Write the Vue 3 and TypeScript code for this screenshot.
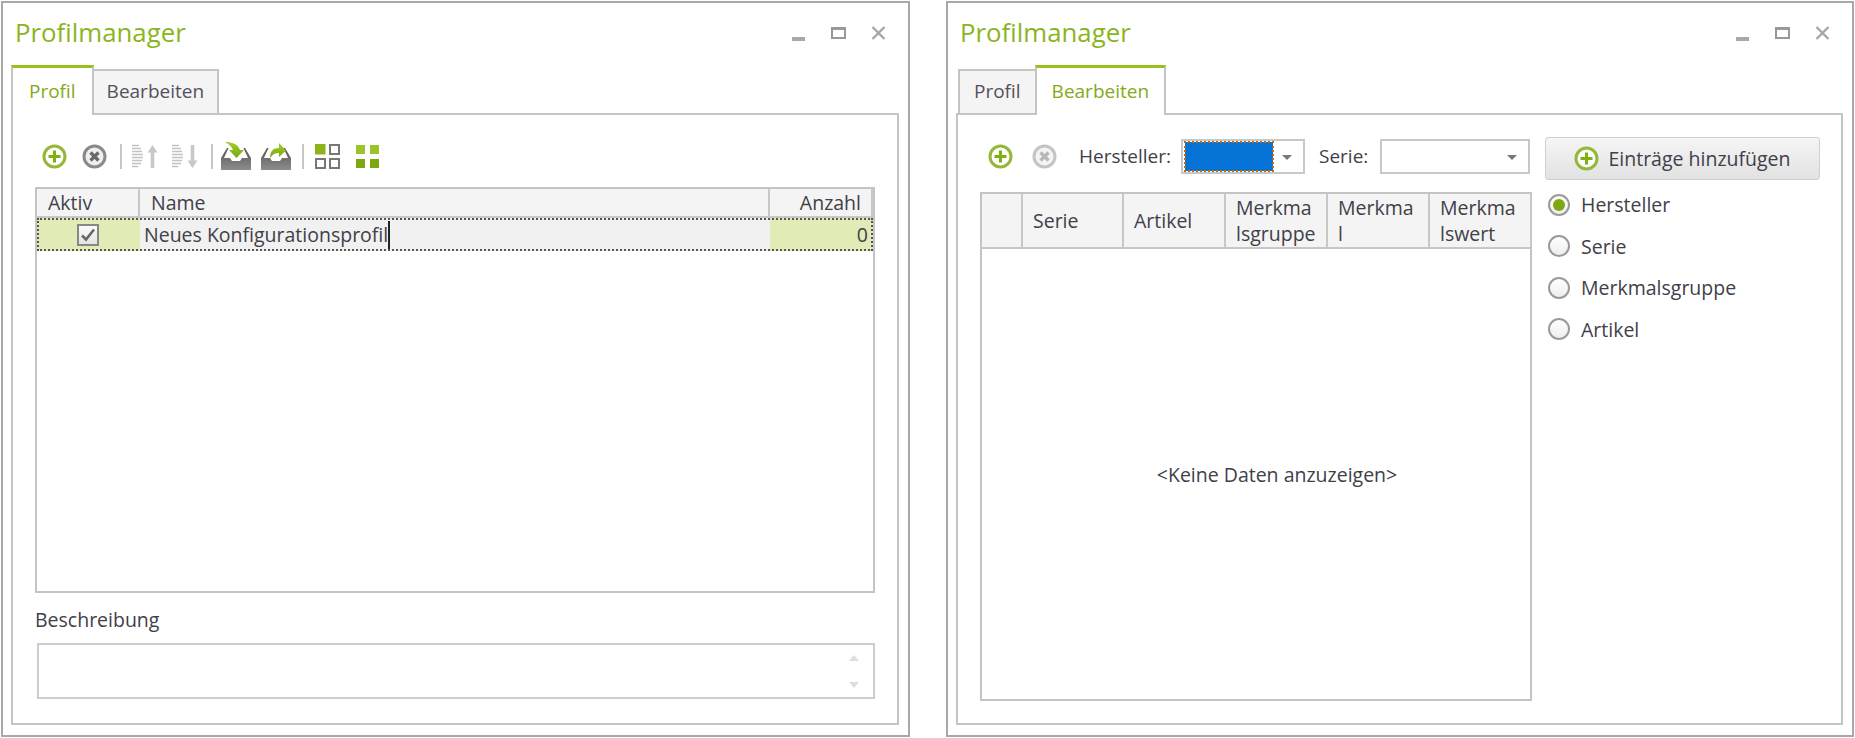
<script setup lang="ts">
import { ref } from 'vue'

type GridColumn = { label: string; width: number }

const leftTabs = ['Profil', 'Bearbeiten']
const profileColumns: { label: string; width: number; right?: boolean }[] = [
  { label: 'Aktiv', width: 103 },
  { label: 'Name', width: 630 },
  { label: 'Anzahl', width: 103, right: true },
]
const editColumns: GridColumn[] = [
  { label: '', width: 41 },
  { label: 'Serie', width: 101 },
  { label: 'Artikel', width: 102 },
  { label: 'Merkma\nlsgruppe', width: 102 },
  { label: 'Merkma\nl', width: 102 },
  { label: 'Merkma\nlswert', width: 102 },
]
const sources = ['Hersteller', 'Serie', 'Merkmalsgruppe', 'Artikel']
const selectedSource = ref('Hersteller')
</script>

<template>
  <div class="page">
    <svg class="defs" aria-hidden="true">
      <defs>
        <linearGradient id="trayFill" x1="0" y1="0" x2="0" y2="1">
          <stop offset="0" stop-color="#555" />
          <stop offset="1" stop-color="#8c8c8c" />
        </linearGradient>
        <linearGradient id="arrowFill" x1="0" y1="0" x2="0" y2="1">
          <stop offset="0" stop-color="#a4cc2c" />
          <stop offset="1" stop-color="#76a810" />
        </linearGradient>
      </defs>
      <symbol id="i-add" viewBox="0 0 25 25">
        <circle cx="12.5" cy="12.5" r="10.5" fill="#fff" stroke="#95b83a" stroke-width="3" />
        <path d="M12.5 6.5v12M6.5 12.5h12" stroke="#7fb011" stroke-width="3" fill="none" />
      </symbol>
      <symbol id="i-del" viewBox="0 0 25 25">
        <circle cx="12.5" cy="12.5" r="10.5" fill="#efefef" stroke="#8a8a8a" stroke-width="3" />
        <path d="M8.5 8.5l8 8M16.5 8.5l-8 8" stroke="#6a6a6a" stroke-width="3.4" fill="none" />
      </symbol>
      <symbol id="i-del-off" viewBox="0 0 25 25">
        <circle cx="12.5" cy="12.5" r="10.5" fill="#f4f4f4" stroke="#c4c4c4" stroke-width="3" />
        <path d="M8.5 8.5l8 8M16.5 8.5l-8 8" stroke="#b8b8b8" stroke-width="3.4" fill="none" />
      </symbol>
      <symbol id="i-lines" viewBox="0 0 12 25">
        <path
          d="M0 1.5h7M0 4.5h9M0 7.5h10M0 10.5h11M0 13.5h11M0 16.5h10M0 19.5h9M0 22.5h6"
          stroke="#c2c2c2"
          stroke-width="1.4"
          fill="none"
        />
      </symbol>
    </svg>

    <!-- PROFIL -->
    <section class="window">
      <header class="titlebar">
        <h1>Profilmanager</h1>
        <div class="controls">
          <span class="ctl"><i class="ctl-min"></i></span>
          <span class="ctl"><i class="ctl-max"></i></span>
          <span class="ctl">
            <svg width="15" height="14" viewBox="0 0 15 14"><path d="M1.5 1l12 12M13.5 1l-12 12" stroke="#a6a6a6" stroke-width="2.4" /></svg>
          </span>
        </div>
      </header>

      <nav class="tabs">
        <button v-for="(t, i) in leftTabs" :key="t" :class="['tab', { active: i === 0 }]">{{ t }}</button>
      </nav>

      <div class="panel panel-profile">
        <div class="toolbar">
          <span class="tool"><svg width="25" height="25"><use href="#i-add" /></svg></span>
          <span class="tool"><svg width="25" height="25"><use href="#i-del" /></svg></span>
          <i class="sep"></i>
          <span class="tool">
            <svg width="27" height="25" viewBox="0 0 27 25">
              <use href="#i-lines" width="12" height="25" />
              <path d="M20.500 1l5 7.500h-3.200V24h-3.600V8.500H15.500z" fill="#c8c8c8" />
            </svg>
          </span>
          <span class="tool">
            <svg width="27" height="25" viewBox="0 0 27 25">
              <use href="#i-lines" width="12" height="25" />
              <path d="M20.500 24l5-7.500h-3.200V1h-3.600v15.500H15.500z" fill="#c8c8c8" />
            </svg>
          </span>
          <i class="sep"></i>
          <span class="tool">
            <svg width="30" height="28" viewBox="0 0 30 28">
              <path d="M0 28V16L6 6h1.500L3 16h6l2 3h8l2-3h6L22.500 6H24l6 10v12z" fill="url(#trayFill)" />
              <path d="M4 0c7 0 13 2 15 8h4l-7.500 8L8 8h4C11 5 8 2 4 0z" fill="url(#arrowFill)" />
            </svg>
          </span>
          <span class="tool">
            <svg width="30" height="28" viewBox="0 0 30 28">
              <path d="M0 28V16L6 6h1.500L3 16h6l2 3h8l2-3h6L22.500 6H24l6 10v12z" fill="url(#trayFill)" />
              <path d="M9 16c0-7 3-10 9-10V1l7 7.500L18 15v-4c-4 0-6 1-9 5z" fill="url(#arrowFill)" />
            </svg>
          </span>
          <i class="sep"></i>
          <span class="tool">
            <svg width="25" height="25" viewBox="0 0 25 25">
              <rect x="0" y="0" width="10.500" height="10.500" fill="#8db319" />
              <rect x="15" y="1" width="9" height="9" fill="#fff" stroke="#777" stroke-width="2" />
              <rect x="1" y="15" width="9" height="9" fill="#fff" stroke="#777" stroke-width="2" />
              <rect x="15" y="15" width="9" height="9" fill="#fff" stroke="#777" stroke-width="2" />
            </svg>
          </span>
          <span class="tool">
            <svg width="23" height="23" viewBox="0 0 23 23">
              <rect x="0" y="0" width="9" height="9" fill="#9cc429" />
              <rect x="14" y="0" width="9" height="9" fill="#9cc429" />
              <rect x="0" y="14" width="9" height="9" fill="#7fa80e" />
              <rect x="14" y="14" width="9" height="9" fill="#7fa80e" />
            </svg>
          </span>
        </div>

        <div class="grid grid-profile">
          <div class="grid-head">
            <div
              v-for="c in profileColumns"
              :key="c.label"
              :class="['head-cell', { right: c.right }]"
              :style="{ width: c.width + 'px' }"
            >{{ c.label }}</div>
          </div>
          <div class="row">
            <div class="cell cell-green cell-check" :style="{ width: profileColumns[0].width + 'px' }">
              <span class="check">
                <svg width="16" height="14" viewBox="0 0 16 14"><path d="M2 7.500l4 4L14 1.500" stroke="#666" stroke-width="2.600" fill="none" /></svg>
              </span>
            </div>
            <div class="cell cell-name" :style="{ width: profileColumns[1].width + 'px' }">
              <span>Neues Konfigurationsprofil</span><i class="caret"></i>
            </div>
            <div class="cell cell-green cell-count" :style="{ width: profileColumns[2].width + 'px' }">0</div>
          </div>
        </div>

        <label class="desc-label">Beschreibung</label>
        <div class="desc-box">
          <i class="scroll-up"></i>
          <i class="scroll-down"></i>
        </div>
      </div>
    </section>

    <!-- BEARBEITEN -->
    <section class="window window-right">
      <header class="titlebar">
        <h1>Profilmanager</h1>
        <div class="controls">
          <span class="ctl"><i class="ctl-min"></i></span>
          <span class="ctl"><i class="ctl-max"></i></span>
          <span class="ctl">
            <svg width="15" height="14" viewBox="0 0 15 14"><path d="M1.500 1l12 12M13.500 1l-12 12" stroke="#a6a6a6" stroke-width="2.400" /></svg>
          </span>
        </div>
      </header>

      <nav class="tabs tabs-right">
        <button v-for="(t, i) in leftTabs" :key="t" :class="['tab', { active: i === 1 }]">{{ t }}</button>
      </nav>

      <div class="panel panel-edit">
        <div class="edit-main">
          <div class="filter-row">
            <span class="filter-tool"><svg width="25" height="25"><use href="#i-add" /></svg></span>
            <span class="filter-tool"><svg width="25" height="25"><use href="#i-del-off" /></svg></span>
            <span class="filter-label label-maker">Hersteller:</span>
            <div class="combo combo-maker">
              <span class="combo-value"></span>
              <i class="combo-arrow"></i>
            </div>
            <span class="filter-label label-series">Serie:</span>
            <div class="combo combo-series">
              <i class="combo-arrow"></i>
            </div>
          </div>

          <div class="grid grid-edit">
            <div class="grid-head grid-head-tall">
              <div
                v-for="(c, i) in editColumns"
                :key="i"
                class="head-cell head-wrap"
                :style="{ width: c.width + 'px' }"
              >{{ c.label }}</div>
            </div>
            <div class="empty">&lt;Keine Daten anzuzeigen&gt;</div>
          </div>
        </div>

        <div class="edit-side">
          <button class="add-btn">
            <svg width="25" height="25"><use href="#i-add" /></svg>
            Einträge hinzufügen
          </button>
          <div class="radios">
            <label v-for="s in sources" :key="s" class="radio-row" @click="selectedSource = s">
              <span :class="['radio', { on: selectedSource === s }]"></span>
              {{ s }}
            </label>
          </div>
        </div>
      </div>
    </section>
  </div>
</template>

<style scoped>
* {
  box-sizing: border-box;
}

.page {
  display: flex;
  gap: 36px;
  padding: 1px 0 0 1px;
  width: 1855px;
  height: 738px;
  font-family: "Open Sans", "Noto Sans", sans-serif;
  font-size: 19.5px;
  color: #404048;
  background: #fff;
  overflow: hidden;
}

.defs {
  position: absolute;
  width: 0;
  height: 0;
}

/* WINDOW */
.window {
  display: flex;
  flex-direction: column;
  width: 909px;
  height: 736px;
  padding: 0 9px 10px 8px;
  border: 2px solid #a8a8a8;
  background: #fff;
}

.window-right {
  width: 908px;
}

.titlebar {
  display: flex;
  justify-content: space-between;
  align-items: center;
  height: 62px;
  flex: none;
}

.titlebar h1 {
  margin: 0 0 4px 4px;
  font-size: 25.8px;
  font-weight: 400;
  color: #8ab51d;
}

.controls {
  display: flex;
  margin: 0 1px 2px 0;
}

.ctl {
  display: flex;
  justify-content: center;
  align-items: center;
  width: 40px;
  height: 20px;
}

.ctl-min {
  width: 13px;
  height: 4px;
  margin-top: 11px;
  background: #a8a8a8;
}

.ctl-max {
  width: 15px;
  height: 12px;
  border: 2px solid #999;
  border-top-width: 3px;
}

/* TABS */
.tabs {
  display: flex;
  align-items: flex-end;
  height: 48px;
  flex: none;
}

.tabs-right {
  padding-left: 2px;
}

.tab {
  height: 46px;
  padding: 0 13px 3px;
  margin-left: -2px;
  margin-bottom: -2px;
  border: 2px solid #c4c4c4;
  background: #f4f4f4;
  font: inherit;
  font-size: 19px;
  color: #55505c;
}

.tab:first-child {
  margin-left: 0;
}

.tabs-right .tab {
  padding: 0 14px 3px;
}

.tab.active {
  position: relative;
  z-index: 1;
  height: 50px;
  padding: 0 16px 1px;
  border-top: 3px solid #97c21c;
  border-bottom: none;
  background: #fff;
  color: #84aa19;
}

.tabs-right .tab.active {
  padding: 0 15px 1px;
}

/* PANEL */
.panel {
  flex: 1;
  min-height: 0;
  border: 2px solid #c4c4c4;
}

.panel-profile {
  display: flex;
  flex-direction: column;
  padding: 28px 22px 24px;
}

.toolbar {
  display: flex;
  align-items: center;
  height: 26px;
  margin: 0 0 18px -1px;
  flex: none;
}

.tool {
  display: flex;
  justify-content: center;
  align-items: center;
  width: 40px;
}

.sep {
  width: 2px;
  height: 25px;
  margin: 0 3px 0 6px;
  background: #c8c8c8;
}

/* GRID */
.grid {
  border: 2px solid #c4c4c4;
  background: #fff;
}

.grid-profile {
  flex: 1;
  min-height: 0;
}

.grid-head {
  display: flex;
  height: 29px;
  background: #f4f4f4;
  border-bottom: 2px solid #c8c8c8;
}

.head-cell {
  flex: none;
  padding: 0 11px;
  line-height: 27px;
  border-right: 2px solid #c8c8c8;
  white-space: pre;
  overflow: hidden;
}

.head-cell.right {
  text-align: right;
  padding-right: 10px;
}

.grid-head-tall {
  height: 55px;
}

.head-wrap {
  display: flex;
  align-items: center;
  padding: 0 0 0 10px;
  line-height: 26px;
}

/* dotted focus frame sits on top of the cells */
.row {
  display: flex;
  height: 33px;
  outline: 2px dotted #555;
  outline-offset: -2px;
}

.cell {
  display: flex;
  align-items: center;
  flex: none;
}

.cell-green {
  background: #e1ebb6;
}

.cell-check {
  justify-content: center;
  padding-right: 2px;
}

.cell-count {
  justify-content: flex-end;
  padding-right: 5px;
}

.cell-name {
  padding-left: 4px;
  background: #f1f1f1;
}

.caret {
  width: 2px;
  height: 28px;
  background: #222;
}

.check {
  display: flex;
  justify-content: center;
  align-items: center;
  width: 22px;
  height: 22px;
  border: 2px solid #888;
  background: linear-gradient(#fafafa, #e4e4e4);
}

/* DESCRIPTION */
.desc-label {
  margin: 15px 0 11px;
  line-height: 24px;
  flex: none;
}

.desc-box {
  position: relative;
  height: 56px;
  margin-left: 2px;
  flex: none;
  border: 2px solid #cdcdcd;
}

.scroll-up,
.scroll-down {
  position: absolute;
  right: 14px;
  border-left: 5px solid transparent;
  border-right: 5px solid transparent;
}

.scroll-up {
  top: 10px;
  border-bottom: 6px solid #dedede;
}

.scroll-down {
  bottom: 9px;
  border-top: 6px solid #dedede;
}

/* EDIT TAB */
.panel-edit {
  display: flex;
  gap: 13px;
  padding: 22px;
}

.edit-main {
  display: flex;
  flex-direction: column;
  width: 552px;
  flex: none;
}

.filter-row {
  display: flex;
  align-items: center;
  height: 35px;
  margin: 2px 0 18px;
  flex: none;
}

.filter-tool {
  display: flex;
  justify-content: center;
  margin-left: -2px;
  width: 44px;
}

.filter-tool + .filter-tool {
  margin-left: 0;
}

.filter-label {
  flex: none;
  margin-top: -2px;
  font-size: 19px;
}

.label-maker {
  width: 102px;
  margin-left: 13px;
}

.label-series {
  width: 61px;
  margin-left: 14px;
}

.combo {
  position: relative;
  display: flex;
  align-items: center;
  height: 35px;
  padding-left: 2px;
  flex: none;
  border: 2px solid #c8c8c8;
}

.combo-maker {
  width: 124px;
}

.combo-series {
  width: 150px;
}

.combo-value {
  width: 88px;
  height: 29px;
  background: #0573d6;
  outline: 2px dotted #c06a10;
  outline-offset: -1px;
}

.combo-arrow {
  position: absolute;
  right: 11px;
  top: 14px;
  border-left: 5px solid transparent;
  border-right: 5px solid transparent;
  border-top: 5px solid #777;
}

.grid-edit {
  flex: 1;
  display: flex;
  flex-direction: column;
  min-height: 0;
}

.empty {
  flex: 1;
  display: flex;
  justify-content: center;
  align-items: center;
  padding-left: 42px;
}

.edit-side {
  width: 275px;
  flex: none;
}

.add-btn {
  display: flex;
  justify-content: center;
  align-items: center;
  gap: 9px;
  width: 100%;
  height: 43px;
  border: 1px solid #d0d0d0;
  border-radius: 3px;
  background: linear-gradient(#f5f5f5, #e2e2e2);
  font: inherit;
  color: #404048;
}

.radios {
  margin-top: 4px;
  padding-left: 3px;
}

.radio-row {
  display: flex;
  align-items: center;
  gap: 11px;
  height: 41.5px;
}

.radio {
  display: flex;
  justify-content: center;
  align-items: center;
  width: 22px;
  height: 22px;
  border: 2px solid #9a9a9a;
  border-radius: 50%;
  background: linear-gradient(#fff, #eee);
}

.radio.on::after {
  content: "";
  width: 12px;
  height: 12px;
  border-radius: 50%;
  background: #7fa80e;
}
</style>
